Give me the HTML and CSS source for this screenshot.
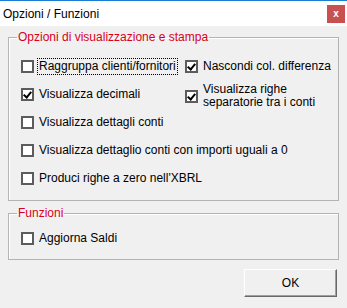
FILE: index.html
```html
<!DOCTYPE html>
<html lang="it">
<head>
  <meta charset="UTF-8" />
  <title>Opzioni / Funzioni</title>
  <link rel="stylesheet" href="styles.css">
</head>
<body>

  <div class="finestra">
    <div class="titolo">
      <span>Opzioni / Funzioni</span>
      <button class="chiudi">x</button>
    </div>

    <div class="contenuto">
      <fieldset class="gruppo">
        <legend>Opzioni di visualizzazione e stampa</legend>
        <div class="griglia">
          <label class="voce"><span class="casella"></span><span class="testo focus">Raggruppa clienti/fornitori</span></label>
          <label class="voce"><span class="casella spuntata"></span><span class="testo">Nascondi col. differenza</span></label>
          <label class="voce"><span class="casella spuntata"></span><span class="testo">Visualizza decimali</span></label>
          <label class="voce doppia"><span class="casella spuntata"></span><span class="testo">Visualizza righe<br>separatorie tra i conti</span></label>
          <label class="voce intera"><span class="casella"></span><span class="testo">Visualizza dettagli conti</span></label>
          <label class="voce intera"><span class="casella"></span><span class="testo">Visualizza dettaglio conti con importi uguali a 0</span></label>
          <label class="voce intera"><span class="casella"></span><span class="testo">Produci righe a zero nell'XBRL</span></label>
        </div>
      </fieldset>

      <fieldset class="gruppo funzioni">
        <legend>Funzioni</legend>
        <label class="voce"><span class="casella"></span><span class="testo">Aggiorna Saldi</span></label>
      </fieldset>

      <div class="azioni">
        <button class="ok">OK</button>
      </div>
    </div>
  </div>

</body>
</html>
```

FILE: styles.css
```css
* { box-sizing: border-box; margin: 0; padding: 0; }

body {
  font-family: 'Liberation Sans', Arial, sans-serif;
  font-size: 12px;
  color: #000;
  background: #f0f0f0;
}

.finestra {
  width: 347px;
  height: 308px;
  background: #f0f0f0;
}

/* Barra del titolo */
.titolo {
  height: 26px;
  background: white;
  border-top: 1px solid #1a7fd4;
  display: flex;
  align-items: center;
  justify-content: space-between;
  padding-left: 3px;
  padding-right: 2px;
}

.titolo span { font-size: 12px; }

.chiudi {
  width: 18px;
  height: 18px;
  background: #c75050;
  color: white;
  border: none;
  font-family: 'Liberation Sans', sans-serif;
  font-weight: bold;
  font-size: 10px;
  line-height: 16px;
}

.contenuto {
  padding: 4px 8px 0 8px;
}

.gruppo {
  border: 1px solid #b4b4b4;
  box-shadow: inset 1px 1px 0 white;
  padding: 8px 4px 8px 12px;
}

.gruppo legend {
  color: #d7001e;
  margin-left: -4px;
  padding: 0 1px;
  line-height: 14px;
}

.griglia {
  display: grid;
  grid-template-columns: 164px 1fr;
  grid-auto-rows: 28px;
}

.intera { grid-column: 1 / 3; }

.voce {
  display: flex;
  align-items: center;
  height: 28px;
  white-space: nowrap;
}

.voce.doppia { padding-top: 4px; }

.testo {
  margin-left: 5px;
  line-height: 13px;
}

.testo.focus {
  outline: 1px dotted #000;
  outline-offset: 1px;
}

.casella {
  flex: none;
  width: 13px;
  height: 13px;
  border: 2px solid #5c5c5c;
  background: white;
  position: relative;
}

.casella.spuntata::after {
  content: "";
  position: absolute;
  left: 2px;
  top: 0px;
  width: 3px;
  height: 6px;
  border: solid #000;
  border-width: 0 2px 2px 0;
  transform: rotate(40deg);
}

.funzioni {
  margin-top: 5px;
  padding-top: 4px;
  padding-bottom: 7px;
}

.azioni {
  display: flex;
  justify-content: flex-end;
  padding-top: 9px;
  padding-right: 2px;
}

.ok {
  width: 93px;
  height: 28px;
  background: #f0f0f0;
  font-family: 'Liberation Sans', sans-serif;
  font-size: 12px;
  color: #000;
  border: 1px solid;
  border-color: #ffffff #696969 #696969 #ffffff;
  box-shadow: inset -1px -1px 0 #a0a0a0;
}
```
